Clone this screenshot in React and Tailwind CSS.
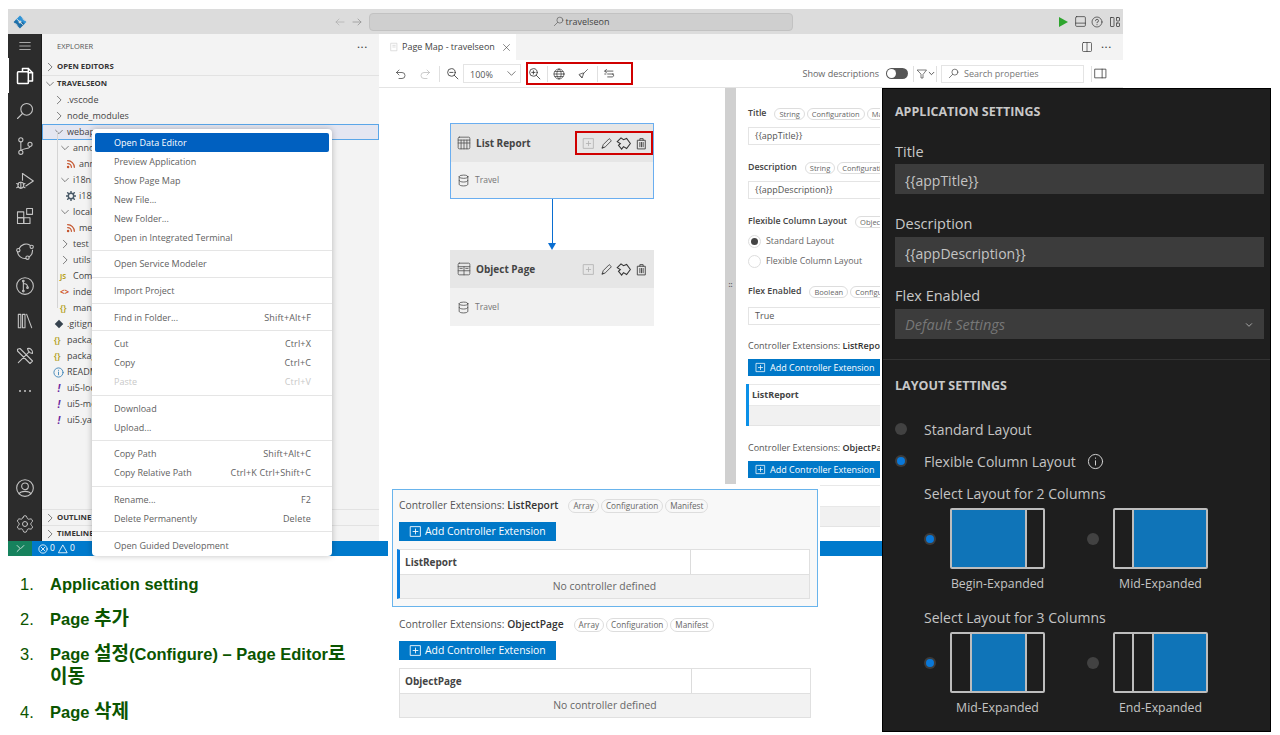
import React from "react";
import { Settings } from "lucide-react";

const Ico = ({ s = 16, w = 1.5, className = "", children, vb = "0 0 24 24" }) => (
  <svg width={s} height={s} viewBox={vb} fill="none" stroke="currentColor" strokeWidth={w} strokeLinecap="round" strokeLinejoin="round" className={"shrink-0 " + className}>{children}</svg>
);
const Chevron = ({ open, className = "" }) => (
  <Ico s={10} w={1.6} className={"text-[#444] " + className}>
    {open ? <path d="M4 8l8 8 8-8" /> : <path d="M8 3l9 9-9 9" />}
  </Ico>
);

const Activity = () => {
  const c = "text-[#c4c4c4]";
  return (
    <div className="w-[34px] shrink-0 bg-[#2c2c2c] flex flex-col items-center border-r border-[#1c1c1c]">
      <div className="h-[24px] flex items-center justify-center">
        <Ico s={14} w={1.4} className={c}><path d="M3 6h18M3 12h18M3 18h18" /></Ico>
      </div>
      <div className="relative w-full h-[35px] flex items-center justify-center">
        <span className="absolute left-0 top-0 bottom-0 w-[1px] bg-white" />
        <Ico s={20} w={1.8} className="text-white"><path d="M9 6V3h7l5 5v10h-5" /><path d="M16 3v5h5" /><rect x="3" y="7" width="13" height="14" rx="1" /></Ico>
      </div>
      <div className="h-[35px] flex items-center justify-center">
        <Ico s={20} w={1.3} className={c}><circle cx="14" cy="10" r="7" /><path d="M9 15l-6 6" /></Ico>
      </div>
      <div className="h-[35px] flex items-center justify-center">
        <Ico s={20} w={1.3} className={c}><circle cx="7" cy="4.5" r="2.5" /><circle cx="7" cy="19.5" r="2.5" /><circle cx="18" cy="10" r="2.5" /><path d="M7 7v10M18 12.5c0 3-7 2-10.5 4.8" /></Ico>
      </div>
      <div className="h-[35px] flex items-center justify-center">
        <Ico s={20} w={1.3} className={c}><path d="M9 3l13 9-9 6" /><path d="M9 3v8" /><circle cx="7" cy="17" r="3.5" /><path d="M7 13.5V21M2 15l2 1M2 20l2-1M12 15l-2 1M12 20l-2-1" /></Ico>
      </div>
      <div className="h-[35px] flex items-center justify-center">
        <Ico s={20} w={1.3} className={c}><rect x="3" y="7" width="7.5" height="7" /><rect x="3" y="14" width="7.5" height="7" /><rect x="10.5" y="14" width="7.5" height="7" /><rect x="14" y="3" width="7" height="7" /></Ico>
      </div>
      <div className="h-[35px] flex items-center justify-center">
        <Ico s={20} w={1.3} className={c}><path d="M5 9a9 9 0 0 1 13-4M21 11a9 9 0 0 1-4 8M13 21a9 9 0 0 1-10-8" /><circle cx="20" cy="7" r="2" /><circle cx="15" cy="20" r="2" /><circle cx="4" cy="11" r="2" /></Ico>
      </div>
      <div className="h-[35px] flex items-center justify-center">
        <Ico s={20} w={1.3} className={c}><circle cx="12" cy="12" r="10" /><path d="M10 6v12M10 9c3 0 5 1 5 4" /><circle cx="10" cy="6" r="1" /><circle cx="10" cy="18" r="1" /><circle cx="15" cy="14" r="1" /></Ico>
      </div>
      <div className="h-[35px] flex items-center justify-center">
        <Ico s={20} w={1.3} className={c}><path d="M4 4h3v16H4zM9 4h3v16H9zM14 4l6 16" /></Ico>
      </div>
      <div className="h-[35px] flex items-center justify-center">
        <Ico s={20} w={1.3} className={c}><path d="M4 20L17 7M15 3a5 5 0 0 1 6 6l-3-1-2-2-1-3zM3 4l3-1 15 15-3 3L3 6z" /></Ico>
      </div>
      <div className="h-[35px] flex items-center justify-center gap-[3px]">
        <span className="w-[2px] h-[2px] rounded-full bg-[#c4c4c4]" /><span className="w-[2px] h-[2px] rounded-full bg-[#c4c4c4]" /><span className="w-[2px] h-[2px] rounded-full bg-[#c4c4c4]" />
      </div>
      <div className="flex-1" />
      <div className="h-[35px] flex items-center justify-center pb-[2px]">
        <Ico s={20} w={1.3} className={c}><circle cx="12" cy="12" r="10" /><circle cx="12" cy="10" r="4" /><path d="M5 19c2-4 12-4 14 0" /></Ico>
      </div>
      <div className="h-[35px] flex items-center justify-center">
        <Settings size={20} strokeWidth={1.2} className={c} />
      </div>
    </div>
  );
};

const FileIcon = ({ t }) => {
  if (t === "rss") return <Ico s={10} w={3} className="text-[#c5562f]"><path d="M4 11a9 9 0 0 1 9 9M4 4a16 16 0 0 1 16 16" /><circle cx="5" cy="19" r="1.500" /></Ico>;
  if (t === "gear") return <Ico s={10} w={3.500} className="text-[#4a5a68]"><circle cx="12" cy="12" r="6.500" /><path d="M12 1v3M12 20v3M1 12h3M20 12h3M4 4l2 2M18 18l2 2M4 20l2-2M18 6l2-2" /></Ico>;
  if (t === "js") return <span className="w-[10px] text-[#b8a21a] text-[7px] font-bold leading-none">JS</span>;
  if (t === "html") return <span className="w-[10px] text-[#d0552a] text-[8px] font-bold leading-none">{"<>"}</span>;
  if (t === "json") return <span className="w-[10px] text-[#b5a32a] text-[8px] font-bold leading-none">{"{}"}</span>;
  if (t === "git") return <span className="w-[10px] h-[8px] flex items-center justify-center"><span className="block w-[6px] h-[6px] rotate-45 bg-[#35424e]" /></span>;
  if (t === "info") return <Ico s={11} w={2} className="text-[#3f86b8]"><circle cx="12" cy="12" r="10" /><path d="M12 11v6M12 7v.5" /></Ico>;
  if (t === "yaml") return <span className="w-[10px] text-center text-[#6a2aa0] text-[10px] font-bold italic leading-none">!</span>;
  return null;
};

const treeRows = [
  { label: ".vscode", cls: "pl-[12px]", chev: "closed" },
  { label: "node_modules", cls: "pl-[12px]", chev: "closed" },
  { label: "webapp", cls: "pl-[12px]", chev: "open", sel: true },
  { label: "annotations", cls: "pl-[18px]", chev: "open" },
  { label: "annotation.xml", cls: "pl-[24px]", icon: "rss" },
  { label: "i18n", cls: "pl-[18px]", chev: "open" },
  { label: "i18n.properties", cls: "pl-[24px]", icon: "gear" },
  { label: "localService", cls: "pl-[18px]", chev: "open" },
  { label: "metadata.xml", cls: "pl-[24px]", icon: "rss" },
  { label: "test", cls: "pl-[18px]", chev: "closed" },
  { label: "utils", cls: "pl-[18px]", chev: "closed" },
  { label: "Component.js", cls: "pl-[18px]", icon: "js" },
  { label: "index.html", cls: "pl-[18px]", icon: "html" },
  { label: "manifest.json", cls: "pl-[18px]", icon: "json" },
  { label: ".gitignore", cls: "pl-[12px]", icon: "git" },
  { label: "package-lock.json", cls: "pl-[12px]", icon: "json" },
  { label: "package.json", cls: "pl-[12px]", icon: "json" },
  { label: "README.md", cls: "pl-[11px]", icon: "info" },
  { label: "ui5-local.yaml", cls: "pl-[12px]", icon: "yaml" },
  { label: "ui5-mock.yaml", cls: "pl-[12px]", icon: "yaml" },
  { label: "ui5.yaml", cls: "pl-[12px]", icon: "yaml" },
];

const Sidebar = () => (
  <div className="w-[337px] shrink-0 bg-[#f3f3f3] flex flex-col text-[#444] text-[9px] relative">
    <div className="h-[25px] flex items-center justify-between pl-[15px] pr-[11px]">
      <span className="text-[7.500px] text-[#555]">EXPLORER</span>
      <span className="text-[9px] tracking-[1px] text-[#444] leading-none pb-[4px] font-bold">...</span>
    </div>
    <div className="h-[17px] flex items-center gap-[1px] pl-[3px] font-bold text-[7.800px] text-[#333] border-b border-[#e2e2e2]">
      <Chevron /> <span className="ml-[1px]">OPEN EDITORS</span>
    </div>
    <div className="h-[16px] flex items-center gap-[1px] pl-[3px] font-bold text-[7.800px] text-[#333]">
      <Chevron open /> <span className="ml-[1px]">TRAVELSEON</span>
    </div>
    <div className="relative">
      <span className="absolute left-[15px] top-[40px] h-[176px] w-[1px] bg-[#d4d4d4]" />
      {treeRows.map((r) => (
        <div key={r.label} className={"h-[16px] flex items-center gap-[3px] " + r.cls + (r.sel ? " bg-[#e4e6f1] outline outline-1 -outline-offset-1 outline-[#5aa6e8]" : "")}>
          {r.chev ? <Chevron open={r.chev === "open"} /> : <FileIcon t={r.icon} />}
          <span className="whitespace-nowrap">{r.label}</span>
        </div>
      ))}
    </div>
    <div className="flex-1" />
    <div className="h-[16px] flex items-center gap-[1px] pl-[3px] font-bold text-[7.800px] text-[#333] border-t border-[#e2e2e2]">
      <Chevron /> <span className="ml-[1px]">OUTLINE</span>
    </div>
    <div className="h-[16px] flex items-center gap-[1px] pl-[3px] font-bold text-[7.800px] text-[#333] border-t border-[#e2e2e2]">
      <Chevron /> <span className="ml-[1px]">TIMELINE</span>
    </div>
  </div>
);

const menu = [
  [["Open Data Editor", "", "hi"], ["Preview Application"], ["Show Page Map"], ["New File..."], ["New Folder..."], ["Open in Integrated Terminal"]],
  [["Open Service Modeler"]],
  [["Import Project"]],
  [["Find in Folder...", "Shift+Alt+F"]],
  [["Cut", "Ctrl+X"], ["Copy", "Ctrl+C"], ["Paste", "Ctrl+V", "off"]],
  [["Download"], ["Upload..."]],
  [["Copy Path", "Shift+Alt+C"], ["Copy Relative Path", "Ctrl+K Ctrl+Shift+C"]],
  [["Rename...", "F2"], ["Delete Permanently", "Delete"]],
  [["Open Guided Development"]],
];

const ContextMenu = () => (
  <div className="absolute left-[84px] top-[120px] w-[240px] h-[427px] bg-white rounded-[4px] shadow-[0_0_6px_rgba(0,0,0,0.25)] px-[3px] pt-[4px] text-[9px] text-[#616161] overflow-hidden">
    {menu.map((g, i) => (
      <div key={i}>
        {i > 0 && <div className="h-[7.600px] flex items-center -mx-[3px]"><div className="h-[1px] w-full bg-[#e5e5e5]" /></div>}
        {g.map(([a, b, st]) => (
          <div key={a} className={"h-[19px] flex items-center justify-between pl-[19px] pr-[18px] rounded-[2px] " + (st === "hi" ? "bg-[#0060c0] text-white" : st === "off" ? "text-[#c8c8c8]" : "")}>
            <span>{a}</span><span className="tracking-[0.15px]">{b}</span>
          </div>
        ))}
      </div>
    ))}
  </div>
);

const Divider = ({ className = "" }) => <span className={"w-[1px] h-[16px] bg-[#e0e0e0] shrink-0 " + className} />;

const ZoomIn = ({ plus }) => (
  <Ico s={13} w={1.5} className="text-[#333]"><circle cx="10" cy="10" r="7" /><path d="M15 15l7 7M7 10h6" />{plus && <path d="M10 7v6" />}</Ico>
);

const Toolbar = () => (
  <div className="h-[28px] bg-white flex items-center text-[9px] text-[#555] border-b border-[#e4e4e4] shrink-0">
    <div className="w-[16px]" />
    <Ico s={12} className="text-[#444]"><path d="M8 4L3 9l5 5" /><path d="M3 9h11a6 6 0 0 1 0 12h-6" /></Ico>
    <div className="w-[12px]" />
    <Ico s={12} className="text-[#bbb]"><path d="M16 4l5 5-5 5" /><path d="M21 9H10a6 6 0 0 0 0 12h6" /></Ico>
    <Divider className="ml-[8px]" />
    <div className="w-[6px]" />
    <ZoomIn />
    <div className="w-[4px]" />
    <div className="w-[58px] h-[19px] border border-[#e4e4e4] flex items-center justify-between pl-[6px] pr-[3px] text-[9px]">
      <span className="pt-[2px]">100%</span>
      <Ico s={11} className="text-[#444]"><path d="M4 8l8 8 8-8" /></Ico>
    </div>
    <div className="w-[5px]" />
    <div className="w-[107px] h-[23px] border-2 border-[#d00000] flex items-center">
      <ZoomIn plus />
      <Divider className="ml-[6px]" />
      <Ico s={12} w={1.4} className="text-[#333] ml-[5px]"><circle cx="12" cy="12" r="10" /><path d="M2 12h20M12 2c-6 6-6 14 0 20M12 2c6 6 6 14 0 20M4 7h16M4 17h16" /></Ico>
      <Ico s={12} w={1.4} className="text-[#333] ml-[12px]"><path d="M21 3L12 12M12 10l-8 3 6 7 3-8zM6 15l4 4" /></Ico>
      <Divider className="ml-[8px]" />
      <Ico s={14} w={1.3} className="text-[#333] ml-[5px]"><path d="M6 4L3 7l3 3M3 7h14M8 12h10M3 12h2M8 17h8l3-2.500L16 12" /></Ico>
    </div>
    <div className="flex-1" />
    <span className="text-[#666]">Show descriptions</span>
    <div className="ml-[7px] w-[22px] h-[11px] rounded-full bg-[#555] flex items-center px-[1px]"><span className="w-[9px] h-[9px] rounded-full bg-white" /></div>
    <Divider className="ml-[5px]" />
    <Ico s={12} w={1.4} className="text-[#444] ml-[2px]"><path d="M3 4h18l-7 9v7l-4 0v-7z" /></Ico>
    <Ico s={7} w={3} className="text-[#444]"><path d="M4 8l8 8 8-8" /></Ico>
    <Divider className="ml-[1px]" />
    <div className="ml-[4px] w-[143px] h-[18px] border border-[#e4e4e4] flex items-center pl-[6px] gap-[5px] text-[#777]">
      <Ico s={11} className="text-[#444]"><circle cx="15" cy="9" r="6.500" /><path d="M10 14l-7 7" /></Ico>
      <span>Search properties</span>
    </div>
    <Divider className="ml-[7px]" />
    <Ico s={13} w={1.4} className="text-[#333] ml-[2px]"><rect x="2" y="4" width="20" height="16" /><path d="M15 4v16" /></Ico>
    <div className="w-[16px]" />
  </div>
);

const Blob = () => (
  <svg width="15" height="15" viewBox="0 0 24 24" fill="none" stroke="#333" strokeWidth="1.700" strokeLinejoin="miter" className="shrink-0">
    <path d="M2 9L8 3l4 3 5-2 6 8-6 8-5-3-3 4-5-6 3-3z" />
  </svg>
);
const CardIcons = ({ boxed }) => (
  <div className={"w-[78px] h-[24px] shrink-0 flex items-center pl-[5px] border-2 " + (boxed ? "border-[#d00000]" : "border-transparent")}>
    <Ico s={13} w={1.5} className="text-[#b0b0b0]"><rect x="3" y="3" width="18" height="18" /><path d="M12 8v8M8 12h8" /></Ico>
    <Ico s={13} w={1.5} className="text-[#333] ml-[5px]"><path d="M4 20l2-6L17 3l4 4L10 18z" /><path d="M4 20l3-1" /></Ico>
    <span className="ml-[3px]"><Blob /></span>
    <Ico s={13} w={1.7} className="text-[#444] ml-[4px]"><path d="M5 6h14v16H5zM9 6V3h6v3M9 10v8M12 10v8M15 10v8" /></Ico>
  </div>
);
const Cylinder = () => (
  <Ico s={13} w={1.4} className="text-[#444]"><ellipse cx="12" cy="5" rx="8" ry="3" /><path d="M4 5v14c0 4 16 4 16 0V5M4 12c0 4 16 4 16 0" /></Ico>
);
const Card = ({ title, icon, boxed, selected }) => (
  <div className={"w-[204px] h-[76px] flex flex-col " + (selected ? "border border-[#6aaef0]" : "")}>
    <div className={"h-[38px] bg-[#e6e6e6] flex items-center gap-[5px] " + (selected ? "pl-[6px]" : "pl-[7px] pr-[1px]")}>
      {icon}
      <span className="text-[10px] font-bold text-[#444]">{title}</span>
      <div className="flex-1" />
      <CardIcons boxed={boxed} />
    </div>
    <div className={"flex-1 bg-[#f1f1f1] flex items-center gap-[5px] pt-[1px] " + (selected ? "pl-[6px]" : "pl-[7px]")}>
      <Cylinder />
      <span className="text-[8.500px] text-[#777]">Travel</span>
    </div>
  </div>
);

const Canvas = () => (
  <div className="w-[346px] shrink-0 bg-white pl-[71px] pt-[35px] flex flex-col">
    <Card selected boxed title="List Report" icon={<Ico s={14} w={1.4} className="text-[#555]"><rect x="2" y="2" width="20" height="20" rx="2" /><path d="M2 7h20M7 7v15M12 7v15M17 7v15M2 12h20" /></Ico>} />
    <div className="w-[204px] h-[51px] flex flex-col items-center">
      <span className="w-[1px] flex-1 bg-[#0a6ed1]" />
      <span className="w-0 h-0 border-l-[4px] border-r-[4px] border-t-[7px] border-l-transparent border-r-transparent border-t-[#0a6ed1]" />
    </div>
    <Card title="Object Page" icon={<Ico s={14} w={1.4} className="text-[#555]"><rect x="2" y="2" width="20" height="20" rx="2" /><path d="M2 8h20M2 15h20M12 8v14M5 11h4M15 11h4" /></Ico>} />
  </div>
);

const Chip = ({ children }) => (
  <span className="h-[12px] px-[4px] shrink-0 rounded-full border border-[#ddd] text-[7.500px] leading-[10px] text-[#666] whitespace-nowrap">{children}</span>
);
const PropHead = ({ label, chips }) => (
  <div className="h-[14px] flex items-center gap-[2px] whitespace-nowrap">
    <span className="text-[8.800px] mr-[6px] text-[#444] font-semibold">{label}</span>
    {chips.map((c) => <Chip key={c}>{c}</Chip>)}
  </div>
);
const Inp = ({ children }) => (
  <div className="w-[160px] h-[18px] mt-[6px] border border-[#e4e4e4] flex items-center pl-[6px] text-[9px] text-[#555]">{children}</div>
);
const PlusBox = ({ s = 11 }) => (
  <Ico s={s} w={1.6} className="text-white"><rect x="3" y="3" width="18" height="18" /><path d="M12 7.500v9M7.500 12h9" /></Ico>
);
const AddBtn = ({ className = "", big }) => (
  <div className={"bg-[#0078c8] text-white flex items-center " + (big ? "w-[157px] h-[19px] pl-[10px] gap-[3px] text-[10.400px] " : "w-[160px] h-[17px] pl-[7px] gap-[4px] text-[9px] ") + className}>
    <PlusBox s={big ? 13 : 11} /><span className="whitespace-nowrap">Add Controller Extension</span>
  </div>
);
const Ext = ({ name }) => (
  <span className="text-[9px] text-[#555] whitespace-nowrap">Controller Extensions: <span className="text-[#333] font-semibold">{name}</span></span>
);

const PropsPane = () => (
  <div className="w-[144px] shrink-0 overflow-hidden bg-white pl-[12px] pt-[19px] flex flex-col">
    <PropHead label="Title" chips={["String", "Configuration", "Manifest"]} />
    <Inp>{"{{appTitle}}"}</Inp>
    <div className="h-[16px]" />
    <PropHead label="Description" chips={["String", "Configuration", "Manifest"]} />
    <Inp>{"{{appDescription}}"}</Inp>
    <div className="h-[16px]" />
    <PropHead label="Flexible Column Layout" chips={["Object", "Configuration"]} />
    <div className="h-[20px] mt-[2px] flex items-center gap-[5px] text-[8.900px] text-[#666] whitespace-nowrap">
      <span className="w-[13px] h-[13px] rounded-full border border-[#ddd] flex items-center justify-center"><span className="w-[7px] h-[7px] rounded-full bg-[#444]" /></span>Standard Layout
    </div>
    <div className="h-[20px] flex items-center gap-[5px] text-[8.900px] text-[#666] whitespace-nowrap">
      <span className="w-[13px] h-[13px] rounded-full border border-[#ddd]" />Flexible Column Layout
    </div>
    <div className="h-[14px]" />
    <PropHead label="Flex Enabled" chips={["Boolean", "Configuration"]} />
    <div className="h-[2px]" />
    <Inp>True</Inp>
    <div className="h-[14px]" />
    <div className="h-[14px] flex items-center"><Ext name="ListReport" /></div>
    <AddBtn className="mt-[6px]" />
    <div className="-ml-[2px] w-[170px] h-[42px] mt-[8px] border-l-[3px] border-[#0a90e8] flex flex-col">
      <div className="h-[22px] flex items-center pl-[3px] text-[9px] font-bold text-[#444] border-y border-[#e8e8e8]">ListReport</div>
      <div className="flex-1 bg-[#f1f1f1] border-b border-[#e4e4e4]" />
    </div>
    <div className="h-[15px]" />
    <div className="h-[14px] flex items-center"><Ext name="ObjectPage" /></div>
    <AddBtn className="mt-[6px]" />
    <div className="w-[170px] h-[42px] mt-[7px] flex flex-col">
      <div className="h-[22px] border-y border-[#e8e8e8]" />
      <div className="flex-1 bg-[#f1f1f1] border-b border-[#e4e4e4]" />
    </div>
  </div>
);

const Window = () => (
  <div className="relative w-[1115px] h-[547px] flex flex-col bg-white">
    <div className="h-[25px] bg-[#dcdcdc] flex items-center shrink-0 relative">
      <svg width="14" height="14" viewBox="0 0 24 24" className="ml-[5px] shrink-0">
        <path d="M12 1l11 11-4 4-7-7-4 4-4-4z" fill="#2f93d6" />
        <path d="M12 23L1 12l4-4 7 7 4-4 4 4z" fill="#1f6fa8" />
        <path d="M7 7l10 10M4 14l4 4M16 6l4 4" stroke="#dcdcdc" strokeWidth="1.500" fill="none" />
      </svg>
      <div className="w-[307px]" />
      <Ico s={12} w={1.3} className="text-[#aaa]"><path d="M20 12H4M10 6l-6 6 6 6" /></Ico>
      <Ico s={12} w={1.3} className="text-[#888] ml-[5px]"><path d="M4 12h16M14 6l6 6-6 6" /></Ico>
      <div className="w-[6px]" />
      <div className="w-[424px] h-[18px] bg-[#cfcfcf] border border-[#c2c2c2] rounded-[4px] flex items-center justify-center gap-[2px] text-[9px] text-[#444]">
        <Ico s={11} w={1.4} className="text-[#555]"><circle cx="15" cy="9" r="6.500" /><path d="M10 14l-7 7" /></Ico>
        travelseon
      </div>
      <div className="flex-1" />
      <svg width="11" height="12" viewBox="0 0 11 12" className="shrink-0"><path d="M1 1l9 5-9 5z" fill="#2ea52e" /></svg>
      <Ico s={13} w={1.3} className="text-[#333] ml-[5px]"><rect x="3" y="3" width="18" height="18" rx="2" /><path d="M3 15h18" /></Ico>
      <Ico s={12} w={1.4} className="text-[#333] ml-[4px]"><circle cx="12" cy="12" r="10" /><path d="M9 9.500a3 3 0 1 1 3 3v1M12 17v.5" /></Ico>
      <Ico s={12} w={1.5} className="text-[#333] ml-[6px]"><rect x="3" y="3" width="7" height="18" rx="1" /><rect x="15" y="3" width="6" height="7" rx="1" /><rect x="15" y="14" width="6" height="7" rx="1" /></Ico>
      <div className="w-[2px]" />
    </div>
    <div className="flex-1 flex min-h-0">
      <Activity />
      <Sidebar />
      <div className="flex-1 flex flex-col min-w-0">
        <div className="h-[26px] bg-[#f3f3f3] flex items-center shrink-0">
          <div className="w-[137px] h-full bg-white flex items-center pl-[10px] text-[9px] text-[#444]">
            <Ico s={10} className="text-[#ccc]"><path d="M5 3h14v18H5zM9 8h6M9 12h6" /></Ico>
            <span className="ml-[3px] whitespace-nowrap">Page Map - travelseon</span>
            <Ico s={9} className="text-[#333] ml-[7px]"><path d="M4 4l16 16M20 4L4 20" /></Ico>
          </div>
          <div className="flex-1" />
          <Ico s={12} w={1.4} className="text-[#333]"><rect x="3" y="3" width="18" height="18" rx="2" /><path d="M12 3v18" /></Ico>
          <span className="ml-[8px] mr-[11px] text-[9px] font-bold tracking-[1px] pb-[4px] text-[#444]">...</span>
        </div>
        <Toolbar />
        <div className="flex-1 flex min-h-0">
          <Canvas />
          <div className="w-[11px] shrink-0 bg-[#d0d0d0] flex items-center justify-center pb-[60px]">
            <span className="text-[7px] text-[#555] font-bold leading-[3px]">::</span>
          </div>
          <PropsPane />
          <div className="flex-1 bg-white" />
        </div>
      </div>
    </div>
    <div className="h-[15px] shrink-0 bg-[#007acc] flex items-center text-white text-[8.500px]">
      <div className="w-[24px] h-full bg-[#16825d] flex items-center justify-center">
        <Ico s={9} w={2}><path d="M3 20l8-8-8-8M21 4l-8 8" /></Ico>
      </div>
      <div className="flex items-center gap-[2px] ml-[6px]">
        <Ico s={10} w={2}><circle cx="12" cy="12" r="10" /><path d="M8 8l8 8M16 8l-8 8" /></Ico>
        <span>0</span>
        <Ico s={10} w={2} className="ml-[1px]"><path d="M12 3l10 18H2z" /></Ico>
        <span>0</span>
      </div>
    </div>
    <ContextMenu />
  </div>
);

const ExtBlock = ({ name, active }) => (
  <>
    <div className="h-[14px] flex items-center gap-[10px]">
      <span className="text-[10.300px] text-[#555] whitespace-nowrap">Controller Extensions: <span className="text-[#333] font-semibold">{name}</span></span>
      <div className="flex gap-[2px]">
        {["Array", "Configuration", "Manifest"].map((c) => (
          <span key={c} className="h-[14px] px-[4px] rounded-full border border-[#ddd] text-[8.200px] leading-[12px] text-[#666]">{c}</span>
        ))}
      </div>
    </div>
    <AddBtn big className="mt-[9px]" />
    <div className={"h-[50px] mt-[8px] flex flex-col border border-[#e0e0e0] bg-white " + (active ? "-ml-[2px] w-[413px] border-l-[3px] border-l-[#0a7fe0]" : "w-[412px]")}>
      <div className="h-[25px] flex border-b border-[#e0e0e0]">
        <div className="flex-1 flex items-center pl-[5px] pt-[1px] text-[10px] font-bold text-[#444]">{name}</div>
        <div className="w-[119px] border-l border-[#dcdcdc]" />
      </div>
      <div className="flex-1 bg-[#f2f2f2] flex items-center justify-center pt-[1px] text-[10.400px] text-[#666]">No controller defined</div>
    </div>
  </>
);

const ExtensionOverlay = () => (
  <div className="absolute left-[388px] top-[484px] w-[432px] h-[251px] bg-white pl-[4px] pt-[5px]">
    <div className="w-[426px] h-[118px] border border-[#69b4ec] bg-[#f8f8f8] pl-[6px] pt-[9px]">
      <ExtBlock name="ListReport" active />
    </div>
    <div className="pl-[7px] pt-[11px]">
      <ExtBlock name="ObjectPage" />
    </div>
  </div>
);

const DarkInput = ({ label, children, className = "" }) => (
  <div className={className}>
    <div className="h-[25px] flex items-center text-[14.500px] text-[#c8c8c8]">{label}</div>
    <div className="h-[30px] bg-[#3c3c3c] flex items-center justify-between pl-[10px] pr-[11px] pt-[3px] text-[14px] text-[#c4c4c4]">{children}</div>
  </div>
);
const DarkRadio = ({ on }) => (
  <span className={"w-[12px] h-[12px] rounded-full shrink-0 flex items-center justify-center " + (on ? "bg-[#3c3c3c]" : "bg-[#424242]")}>
    {on && <span className="w-[8px] h-[8px] rounded-full bg-[#0a78d8]" />}
  </span>
);
const Layout = ({ cols }) => (
  <div className="w-[95px] h-[61px] border-2 border-[#bdbdbd] rounded-[2px] flex bg-[#1e1e1e] overflow-hidden">
    {cols.map(([w, blue], i) => (
      <div key={i} className={w + " h-full " + (blue ? "bg-[#0f74b8]" : "") + (i > 0 ? " border-l-2 border-[#bdbdbd]" : "")} />
    ))}
  </div>
);
const LayoutOpt = ({ on, caption, cols }) => (
  <div className="w-[163px] flex">
    <div className="w-[26px] h-[61px] flex items-center"><DarkRadio on={on} /></div>
    <div className="flex flex-col items-center w-[95px]">
      <Layout cols={cols} />
      <span className="h-[30px] flex items-center text-[12.300px] text-[#c4c4c4] whitespace-nowrap">{caption}</span>
    </div>
  </div>
);
const DarkPanel = () => (
  <div className="absolute left-[882px] top-[88px] w-[389px] h-[644px] bg-[#1e1e1e] border-[1.500px] border-black flex flex-col [font-family:'Open_Sans',sans-serif]">
    <div className="pl-[12px] pr-[6px]">
      <div className="h-[14px] mt-[16px] flex items-center text-[12.500px] font-bold text-[#c8c8c8]">APPLICATION SETTINGS</div>
      <DarkInput label="Title" className="mt-[20px]">{"{{appTitle}}"}</DarkInput>
      <DarkInput label="Description" className="mt-[17.500px]">{"{{appDescription}}"}</DarkInput>
      <DarkInput label="Flex Enabled" className="mt-[17px]">
        <span className="italic text-[#777] text-[14.500px]">Default Settings</span>
        <Ico s={8} w={3} className="text-[#aaa]"><path d="M4 8l8 8 8-8" /></Ico>
      </DarkInput>
    </div>
    <div className="h-[1px] bg-[#333] mt-[20px] shrink-0" />
    <div className="pl-[12px]">
      <div className="h-[14px] mt-[19.500px] flex items-center text-[12.500px] font-bold text-[#c8c8c8]">LAYOUT SETTINGS</div>
      <div className="h-[20px] mt-[26px] flex items-center gap-[17px] text-[14px] text-[#c4c4c4]"><DarkRadio /> Standard Layout</div>
      <div className="h-[20px] mt-[12px] flex items-center text-[14px] text-[#c4c4c4]">
        <DarkRadio on /><span className="ml-[17px]">Flexible Column Layout</span>
        <Ico s={17} w={1.4} className="ml-[11px] text-[#d0d0d0]"><circle cx="12" cy="12" r="10" /><path d="M12 11v6M12 7v.5" /></Ico>
      </div>
      <div className="pl-[29px]">
        <div className="h-[20px] mt-[12px] flex items-center text-[14px] text-[#c4c4c4]">Select Layout for 2 Columns</div>
        <div className="flex mt-[5px]">
          <LayoutOpt on caption="Begin-Expanded" cols={[["w-[73px]", true], ["flex-1"]]} />
          <LayoutOpt caption="Mid-Expanded" cols={[["w-[17px]"], ["flex-1", true]]} />
        </div>
        <div className="h-[20px] mt-[8px] flex items-center text-[14px] text-[#c4c4c4]">Select Layout for 3 Columns</div>
        <div className="flex mt-[5px]">
          <LayoutOpt on caption="Mid-Expanded" cols={[["w-[18px]"], ["w-[55px]", true], ["flex-1"]]} />
          <LayoutOpt caption="End-Expanded" cols={[["w-[17px]"], ["w-[20px]"], ["flex-1", true]]} />
        </div>
      </div>
    </div>
  </div>
);

const K = ({ children }) => <span className="text-[19px] leading-[1]">{children}</span>;
const notes = [
  ["1.", "Application setting"],
  ["2.", <>Page <K>추가</K></>],
  ["3.", <>Page <K>설정</K>(Configure) – Page Editor<K>로 이동</K></>],
  ["4.", <>Page <K>삭제</K></>],
];
const Notes = () => (
  <div className="ml-[20px] mt-[17px] w-[340px] flex flex-col gap-[12px] text-[#0b5500] text-[16.500px] leading-[23px] [font-family:'Liberation_Sans','Noto_Sans_CJK_KR',sans-serif]">
    {notes.map(([n, t]) => (
      <div key={n} className="flex">
        <span className="w-[30px] shrink-0 font-normal">{n}</span>
        <span className="font-bold">{t}</span>
      </div>
    ))}
  </div>
);

export default function App() {
  return (
    <div className="relative w-[1280px] h-[735px] overflow-hidden bg-white pt-[9px] [font-family:'Open_Sans',sans-serif]">
      <div className="ml-[8px]"><Window /></div>
      <Notes />
      <ExtensionOverlay />
      <DarkPanel />
    </div>
  );
}
